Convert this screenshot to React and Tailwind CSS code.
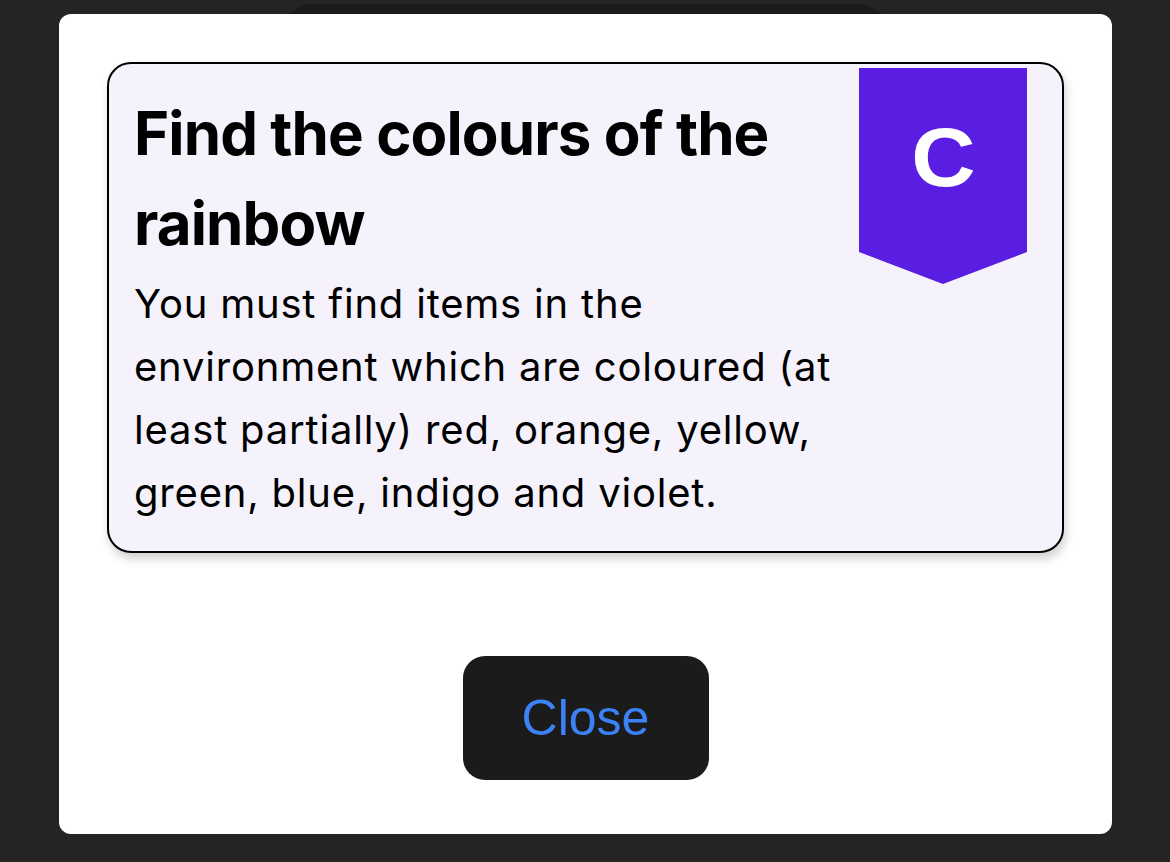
import React from "react";

export default function App() {
  return (
    <div className="relative w-[1170px] h-[862px] overflow-hidden bg-[#242424]" style={{ fontFamily: "Inter, 'Noto Sans', sans-serif" }}>
      <div className="flex justify-center pt-[4px] pl-[1px]">
        <div className="w-[605px] h-[200px] rounded-[30px] bg-[#1b1b1b]" />
      </div>

      <div className="absolute left-[59px] top-[14px] w-[1053px] h-[820px] rounded-[12px] bg-white p-[48px] flex flex-col items-center">
        <div className="w-full flex rounded-[24px] border-2 border-black bg-[#f5f2fc] shadow-[2px_6px_10px_rgba(0,0,0,0.18)] pl-[25px] pr-[35px] pt-[4px] pb-[27px]">
          <div className="flex-1 pt-[20px]">
            <h1 className="text-[60px] leading-[90px] font-bold text-black tracking-[-0.9px]">
              Find the colours of the rainbow
            </h1>
            <p className="text-[40px] leading-[63px] text-black mt-[4px] tracking-[0.8px]">
              You must find items in the environment which are coloured (at least partially) red, orange, yellow, green, blue, indigo and violet.
            </p>
          </div>
          <div className="w-[168px] h-[216px] shrink-0 relative">
            <svg width="168" height="216" viewBox="0 0 168 216" className="absolute inset-0">
              <polygon points="0,0 168,0 168,184 84,216 0,184" fill="#5a1de2" />
            </svg>
            <div
              className="relative w-[168px] h-[184px] flex items-start justify-center pt-[47px] text-white font-bold text-[84px] leading-[84px]"
              style={{ fontFamily: "'Liberation Sans', Arial, sans-serif" }}
            >
              <span className="inline-block scale-x-[1.06]">C</span>
            </div>
          </div>
        </div>

        <button
          className="mt-[103px] w-[246px] h-[124px] rounded-[22px] bg-[#1b1b1b] text-[#3b82f6] text-[50px] flex items-center justify-center"
          style={{ fontFamily: "'Liberation Sans', Arial, sans-serif" }}
        >
          Close
        </button>
      </div>
    </div>
  );
}
